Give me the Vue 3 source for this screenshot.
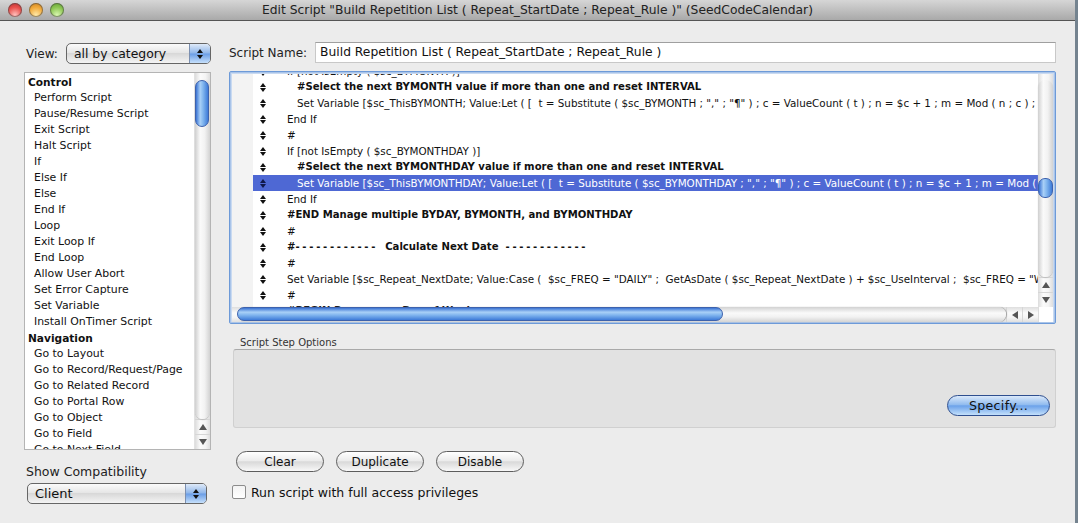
<script setup>
const controlSteps = ['Perform Script','Pause/Resume Script','Exit Script','Halt Script','If','Else If','Else','End If','Loop','Exit Loop If','End Loop','Allow User Abort','Set Error Capture','Set Variable','Install OnTimer Script']
const navSteps = ['Go to Layout','Go to Record/Request/Page','Go to Related Record','Go to Portal Row','Go to Object','Go to Field','Go to Next Field']
const rows = [
  { t: 'If [not IsEmpty ( $sc_BYMONTH )]', i: 0 },
  { t: '#Select the next BYMONTH value if more than one and reset INTERVAL', i: 1, b: true },
  { t: 'Set Variable [$sc_ThisBYMONTH; Value:Let ( [  t = Substitute ( $sc_BYMONTH ; "," ; "¶" ) ; c = ValueCount ( t ) ; n = $c + 1 ; m = Mod ( n ; c ) ;', i: 1 },
  { t: 'End If', i: 0 },
  { t: '#', i: 0 },
  { t: 'If [not IsEmpty ( $sc_BYMONTHDAY )]', i: 0 },
  { t: '#Select the next BYMONTHDAY value if more than one and reset INTERVAL', i: 1, b: true },
  { t: 'Set Variable [$sc_ThisBYMONTHDAY; Value:Let ( [  t = Substitute ( $sc_BYMONTHDAY ; "," ; "¶" ) ; c = ValueCount ( t ) ; n = $c + 1 ; m = Mod ( n ; c ) ;', i: 1, sel: true },
  { t: 'End If', i: 0 },
  { t: '#END Manage multiple BYDAY, BYMONTH, and BYMONTHDAY', i: 0, b: true },
  { t: '#', i: 0 },
  { heading: '  Calculate Next Date  ', i: 0, b: true },
  { t: '#', i: 0 },
  { t: 'Set Variable [$sc_Repeat_NextDate; Value:Case (  $sc_FREQ = "DAILY" ;  GetAsDate ( $sc_Repeat_NextDate ) + $sc_UseInterval ;  $sc_FREQ = "WEEKLY" ; GetAsDate', i: 0 },
  { t: '#', i: 0 },
  { t: '#BEGIN Recurrence Day of Week', i: 0, b: true }
]
</script>

<template>
  <div class="window">
    <header class="titlebar">
      <div class="lights">
        <span class="light red"></span>
        <span class="light amber"></span>
        <span class="light green"></span>
      </div>
      <div class="title">Edit Script "Build Repetition List ( Repeat_StartDate ; Repeat_Rule )" (SeedCodeCalendar)</div>
    </header>

    <main class="body">
      <aside class="left">
        <div class="view-row">
          <label class="lbl">View:</label>
          <div class="select view-select">
            <span class="select-text">all by category</span>
            <span class="stepper"><i class="up"></i><i class="down"></i></span>
          </div>
        </div>

        <div class="steps">
          <div class="steps-list">
            <div class="step head">Control</div>
            <div v-for="s in controlSteps" :key="s" class="step">{{ s }}</div>
            <div class="step head">Navigation</div>
            <div v-for="s in navSteps" :key="s" class="step">{{ s }}</div>
          </div>
          <div class="vbar">
            <div class="vtrack">
              <span class="vthumb steps-thumb"></span>
            </div>
            <div class="arrows-v">
              <span class="arrow"><i class="up"></i></span>
              <span class="arrow"><i class="down"></i></span>
            </div>
          </div>
        </div>

        <div class="compat-label">Show Compatibility</div>
        <div class="select client-select">
          <span class="select-text client-text">Client</span>
          <span class="stepper"><i class="up"></i><i class="down"></i></span>
        </div>
      </aside>

      <section class="right">
        <div class="name-row">
          <label class="lbl">Script Name:</label>
          <div class="name-input">Build Repetition List ( Repeat_StartDate ; Repeat_Rule )</div>
        </div>

        <div class="script-frame">
          <div class="script-top">
            <div class="gutter"></div>
            <div class="script-rows">
              <div class="rows-inner">
                <div v-for="(r, n) in rows" :key="n" class="row" :class="{ sel: r.sel }">
                  <span class="grip"><i class="up"></i><i class="down"></i></span>
                  <span v-if="r.heading" class="row-text bold">#<span class="dashes">------------</span>{{ r.heading }}<span class="dashes">------------</span></span>
                  <span v-else class="row-text" :class="{ bold: r.b, indent: r.i }">{{ r.t }}</span>
                </div>
              </div>
            </div>
            <div class="vbar main-v">
              <div class="vtrack">
                <span class="vthumb main-thumb"></span>
              </div>
              <div class="arrows-v">
                <span class="arrow"><i class="up"></i></span>
                <span class="arrow"><i class="down"></i></span>
              </div>
            </div>
          </div>
          <div class="hbar">
            <div class="htrack"><span class="hthumb"></span></div>
            <span class="harrow"><i class="left-a"></i></span>
            <span class="harrow"><i class="right-a"></i></span>
            <span class="corner"></span>
          </div>
        </div>

        <div class="options-label">Script Step Options</div>
        <div class="options-box">
          <button class="btn default">Specify...</button>
        </div>

        <div class="btn-row">
          <button class="btn">Clear</button>
          <button class="btn">Duplicate</button>
          <button class="btn">Disable</button>
        </div>

        <div class="check-row">
          <span class="check"></span>
          <span class="check-label">Run script with full access privileges</span>
        </div>
      </section>
    </main>
  </div>
</template>

<style>
html, body { margin: 0; background: #74838f; }
</style>

<style scoped>
.window {
  width: 1075px;
  height: 523px;
  background: #ececec;
  font-family: "DejaVu Sans", "Open Sans", sans-serif;
  font-size: 11px;
  color: #111;
  overflow: hidden;
}
.titlebar {
  height: 20px;
  background: linear-gradient(#d6d6d6, #a9a9a9);
  border-bottom: 1px solid #555;
  position: relative;
  display: flex;
  align-items: center;
  justify-content: center;
}
.lights { position: absolute; left: 8px; top: 3px; display: flex; gap: 7px; }
.light { width: 14px; height: 14px; border-radius: 50%; box-shadow: inset 0 0 0 1px rgba(70,70,70,.55); }
.red { background: radial-gradient(circle at 50% 85%, #ffc0bc, #e8504c 55%, #b52c2c); }
.amber { background: radial-gradient(circle at 50% 85%, #ffe9a8, #f1a93a 55%, #c67c1c); }
.green { background: radial-gradient(circle at 50% 85%, #d9f7b0, #8cc653 55%, #5c9a2c); }
.title { font-size: 12.3px; color: #222; white-space: nowrap; }

.body { display: flex; padding-left: 24px; }
.left { width: 187px; flex: none; }
.right { width: 827px; margin-left: 18px; flex: none; }

.lbl { font-size: 12px; color: #222; white-space: nowrap; }
.view-row { display: flex; align-items: center; gap: 8px; margin: 22px 0 8px 2px; height: 21px; }
.select {
  height: 19px;
  border: 1px solid #666;
  border-radius: 5px;
  background: linear-gradient(#fbfbfb, #e6e6e6 45%, #d8d8d8 50%, #f4f4f4);
  display: flex;
  align-items: center;
  justify-content: space-between;
  overflow: hidden;
  box-sizing: content-box;
}
.select-text { padding-left: 7px; font-size: 12.4px; }
.client-text { font-size: 13px; }
.view-select { width: 143px; }
.client-select { width: 178px; margin-left: 3px; }
.stepper {
  width: 20px;
  height: 100%;
  background: linear-gradient(#dfeaf8, #8fb6ea 48%, #6a9de6 52%, #c6e0fb);
  border-left: 1px solid #7b8fb0;
  display: flex;
  flex-direction: column;
  align-items: center;
  justify-content: center;
  gap: 2px;
}
i { display: block; width: 0; height: 0; border-left: 3px solid transparent; border-right: 3px solid transparent; }
i.up { border-bottom: 4px solid #111; }
i.down { border-top: 4px solid #111; }

.steps {
  height: 378px;
  border: 1px solid #b4b4b4;
  background: #fff;
  display: flex;
  box-sizing: border-box;
  overflow: hidden;
}
.steps-list { flex: 1; overflow: hidden; padding-top: 1px; min-width: 0; }
.step { height: 16px; line-height: 16px; padding-left: 9px; font-size: 10.9px; color: #111; white-space: nowrap; }
.step.head { padding-left: 3px; font-weight: bold; font-size: 10.6px; }

.vbar {
  width: 15px;
  flex: none;
  display: flex;
  flex-direction: column;
  background: linear-gradient(90deg, #dcdcdc, #fbfbfb 35%, #f4f4f4 70%, #dedede);
  border-left: 1px solid #e2e2e2;
}
.vtrack { flex: 1; position: relative; }
.vtrack::after {
  content: "";
  position: absolute;
  left: 0;
  right: 0;
  top: 6px;
  bottom: 0;
  border-radius: 8px;
  background: linear-gradient(90deg, #cfcfcf, #fafafa 35%, #f2f2f2 65%, #d2d2d2);
  box-shadow: 0 1px 1px #bdbdbd;
}
.vthumb {
  position: absolute;
  left: 0;
  right: 1px;
  z-index: 1;
  border-radius: 7px;
  border: 1px solid #3d62ad;
  background: linear-gradient(90deg, #3a73d3, #a9d0f7 35%, #7fb4ee 60%, #3e7bd8);
  box-sizing: border-box;
}
.steps-thumb { top: 7px; height: 47px; }
.arrows-v { height: 30px; flex: none; }
.arrow {
  height: 15px;
  display: flex;
  align-items: center;
  justify-content: center;
  border-top: 1px solid #d6d6d6;
  box-sizing: border-box;
}
.arrow i.up { border-bottom: 6px solid #555; border-left-width: 4px; border-right-width: 4px; }
.arrow i.down { border-top: 6px solid #555; border-left-width: 4px; border-right-width: 4px; }

.name-row { display: flex; align-items: center; gap: 8px; height: 21px; margin: 21px 0 8px; }
.name-input {
  width: 741px;
  height: 21px;
  box-sizing: border-box;
  background: #fff;
  border: 1px solid #c8c8c8;
  border-top-color: #9f9f9f;
  padding-left: 4px;
  line-height: 19px;
  font-size: 12.3px;
  white-space: nowrap;
}

.script-frame {
  height: 253px;
  box-sizing: border-box;
  border: 1px solid #6d9ad8;
  box-shadow: inset 0 0 0 1px #a9c4e9, inset 0 0 0 2px #c9daf1;
  border-radius: 2px;
  padding: 2px 2px 1px;
  display: flex;
  flex-direction: column;
  background: #fff;
}
.script-top { flex: 1; display: flex; min-height: 0; }
.gutter { width: 21px; flex: none; background: #f3f3f3; }
.script-rows { flex: 1; min-width: 0; overflow: hidden; background: #fff; }
.rows-inner { margin-top: -11px; }
.row { height: 16px; line-height: 16px; display: flex; align-items: center; white-space: pre; overflow: hidden; font-size: 10.36px; color: #111; }
.row.sel { background: #4e68d4; color: #fff; }
.grip { width: 34px; flex: none; display: flex; flex-direction: column; align-items: center; gap: 1px; padding-right: 15px; box-sizing: border-box; }
.grip i { border-left-width: 3px; border-right-width: 3px; }
.grip i.up { border-bottom-width: 4px; }
.grip i.down { border-top-width: 4px; }
.row.sel .grip i.up { border-bottom-color: #10184a; }
.row.sel .grip i.down { border-top-color: #10184a; }
.row-text.indent { padding-left: 10px; }
.row-text.bold { font-weight: bold; font-size: 10.1px; }
.dashes { letter-spacing: 2.7px; }

.main-thumb { top: 104px; height: 20px; right: 0; }
.main-v { border-left: 0; }

.hbar { height: 15px; flex: none; display: flex; align-items: stretch; background: linear-gradient(#dedede, #fbfbfb 40%, #f4f4f4 70%, #e0e0e0); }
.htrack { flex: 1; position: relative; }
.htrack::after {
  content: "";
  position: absolute;
  left: 5px;
  right: 0;
  top: 0;
  bottom: 0;
  border-radius: 8px;
  background: linear-gradient(#d2d2d2, #fafafa 40%, #f2f2f2 65%, #d4d4d4);
  box-shadow: 1px 0 1px #9f9f9f;
}
.hthumb {
  position: absolute;
  left: 5px;
  top: 0;
  width: 486px;
  height: 14px;
  z-index: 1;
  border-radius: 7px;
  border: 1px solid #3d62ad;
  box-sizing: border-box;
  background: linear-gradient(#3a73d3, #a9d0f7 35%, #7fb4ee 60%, #3e7bd8);
}
.harrow { width: 16px; flex: none; display: flex; align-items: center; justify-content: center; border-left: 1px solid #d6d6d6; box-sizing: border-box; }
i.left-a { border: 0; border-top: 4px solid transparent; border-bottom: 4px solid transparent; border-right: 6px solid #555; }
i.right-a { border: 0; border-top: 4px solid transparent; border-bottom: 4px solid transparent; border-left: 6px solid #555; }
.corner { width: 15px; flex: none; background: #fff; border-left: 1px solid #ddd; box-sizing: border-box; }

.options-label { font-size: 10px; color: #333; padding-left: 11px; margin-top: 12px; height: 13px; line-height: 13px; }
.options-box {
  height: 79px;
  width: 823px;
  margin-left: 4px;
  box-sizing: border-box;
  background: #e2e2e2;
  border: 1px solid #d0d0d0;
  border-top-color: #a9a9a9;
  border-radius: 3px;
  display: flex;
  align-items: flex-end;
  justify-content: flex-end;
  padding: 0 5px 11px 0;
}
.btn {
  width: 88px;
  height: 21px;
  padding: 0;
  border: 1px solid #5d5d5d;
  border-radius: 11px;
  background: linear-gradient(#ffffff, #ececec 45%, #d9d9d9 52%, #f8f8f8);
  font-family: inherit;
  font-size: 12px;
  color: #111;
  line-height: 18px;
}
.btn.default {
  width: 103px;
  border-color: #2f4f8f;
  background: linear-gradient(#dbe9fa, #92bcef 45%, #6ca2ea 52%, #c3e0fb);
  font-size: 12.6px;
  letter-spacing: .3px;
}
.btn-row { display: flex; gap: 12px; margin: 23px 0 0 7px; }
.check-row { display: flex; align-items: center; gap: 5px; margin: 12px 0 0 3px; height: 16px; }
.check { width: 12px; height: 12px; border: 1px solid #8c8c8c; border-radius: 2px; background: linear-gradient(#f3f3f3, #fff); }
.check-label { font-size: 12.5px; color: #111; white-space: nowrap; }
.compat-label { font-size: 12.5px; color: #222; margin: 14px 0 4px 2px; height: 15px; line-height: 15px; }
</style>
